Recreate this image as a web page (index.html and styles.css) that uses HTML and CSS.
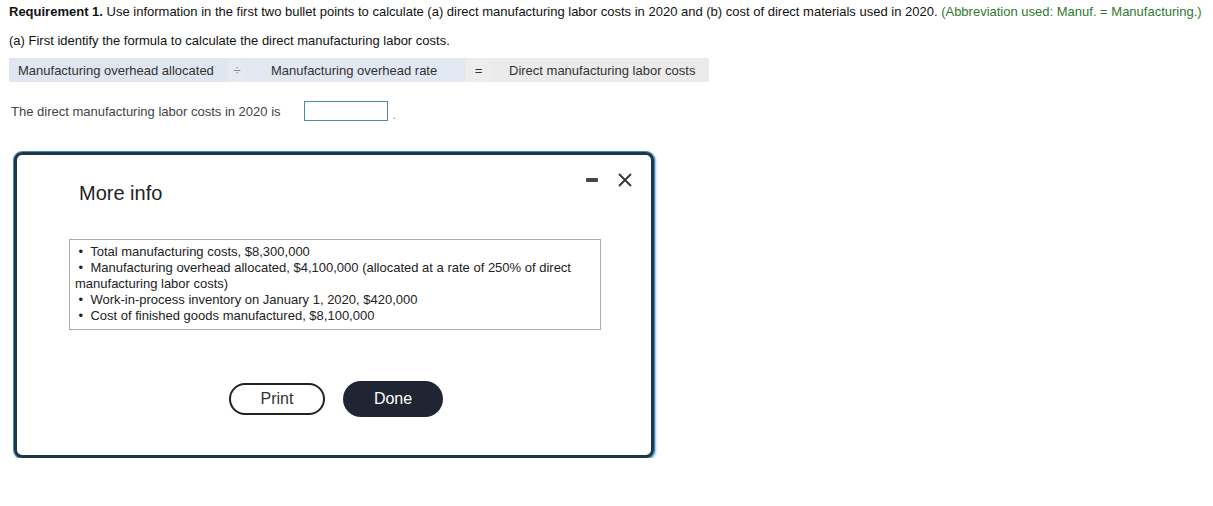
FILE: index.html
```html
<!DOCTYPE html>
<html>
<head>
<meta charset="utf-8">
<link rel="stylesheet" href="styles.css">
</head>
<body>
<div class="page">
  <p class="req"><b>Requirement 1.</b> Use information in the first two bullet points to calculate (a) direct manufacturing labor costs in 2020 and (b) cost of direct materials used in 2020. <span class="green">(Abbreviation used: Manuf. = Manufacturing.)</span></p>
  <p class="sub">(a) First identify the formula to calculate the direct manufacturing labor costs.</p>
  <div class="formula">
    <div class="cell blue">Manufacturing overhead allocated</div>
    <div class="op blue2">÷</div>
    <div class="cell blue3">Manufacturing overhead rate</div>
    <div class="op gray2">=</div>
    <div class="cell gray">Direct manufacturing labor costs</div>
  </div>
  <div class="answer">
    <span>The direct manufacturing labor costs in 2020 is</span>
    <span class="inputbox"></span>
    <span class="dot">.</span>
  </div>
  <div class="dialog">
    <div class="dhead">
      <h2>More info</h2>
      <div class="ctrls">
        <span class="minus"></span>
        <svg class="close" width="16" height="16" viewBox="0 0 16 16"><path d="M2 2 L14 14 M14 2 L2 14" stroke="#333" stroke-width="1.8" fill="none"/></svg>
      </div>
    </div>
    <div class="info">
      <div>&nbsp;•&nbsp; Total manufacturing costs, $8,300,000</div>
      <div>&nbsp;•&nbsp; Manufacturing overhead allocated, $4,100,000 (allocated at a rate of 250% of direct manufacturing labor costs)</div>
      <div>&nbsp;•&nbsp; Work-in-process inventory on January 1, 2020, $420,000</div>
      <div>&nbsp;•&nbsp; Cost of finished goods manufactured, $8,100,000</div>
    </div>
    <div class="btns">
      <button class="print">Print</button>
      <button class="done">Done</button>
    </div>
  </div>
</div>
</body>
</html>
```
FILE: styles.css
```css
* { box-sizing: border-box; }
html, body { margin: 0; padding: 0; background: #fff; }
body { font-family: "Liberation Sans", Arial, sans-serif; color: #222; }
.page { padding: 4px 0 0 9px; }
.req { margin: 0; font-size: 13px; line-height: 16px; color: #111; white-space: nowrap; }
.green { color: #2f7a2f; }
.sub { margin: 13px 0 0; font-size: 13px; line-height: 16px; color: #111; }
.formula { display: flex; margin-top: 9px; height: 24px; font-size: 13px; color: #333; }
.formula > div { display: flex; align-items: center; }
.cell { width: 219px; padding-left: 9px; }
.cell.blue3 { padding-left: 25px; }
.cell.gray { padding-left: 19px; }
.op { justify-content: center; }
.op.blue2 { width: 18px; background: #e6eaf0; color: #888; }
.op.gray2 { width: 25px; background: #ededed; padding-left: 2px; }
.blue { background: #dfe6ef; }
.blue3 { background: #e1e8f2; }
.gray { background: #ebebeb; }
.answer { display: flex; align-items: center; margin-top: 19px; font-size: 13px; color: #444; height: 20px; padding-left: 2px; }
.inputbox { display: inline-block; width: 84px; height: 20px; border: 1px solid #4d8aa8; margin-left: 23px; }
.dot { margin-left: 5px; margin-top: 6px; color: #888; }
.dialog {
  margin: 31px 0 0 5px;
  width: 640px; height: 306px;
  border: 3px solid #1d3648;
  border-radius: 8px;
  box-shadow: 0 0 0 1px #3d8ec4, 1px 1px 2px 1px rgba(61,142,196,0.6);
  padding: 0 0 0 62px;
  display: flex; flex-direction: column;
}
.dhead { display: flex; justify-content: space-between; align-items: flex-start; height: 84px; }
.dhead h2 { margin: 27px 0 0; font-weight: normal; font-size: 20px; color: #222; }
.ctrls { display: flex; align-items: center; gap: 19px; margin: 17px 18px 0 0; }
.minus { display: block; width: 12px; height: 4px; background: #444; border-radius: 1px; }
.close { display: block; }
.info { width: 532px; margin-left: -10px; border: 1px solid #aaa; padding: 4px 4px 5px 5px; font-size: 13px; line-height: 16px; color: #222; }
.btns { display: flex; gap: 18px; align-items: center; margin: 51px 0 0 150px; }
button { font-family: "Liberation Sans", Arial, sans-serif; font-size: 16px; cursor: pointer; }
.print { width: 96px; height: 32px; border: 2px solid #222; border-radius: 16px; background: #fff; color: #333; }
.done { width: 100px; height: 36px; border: none; border-radius: 18px; background: #1f2532; color: #fff; }
```
